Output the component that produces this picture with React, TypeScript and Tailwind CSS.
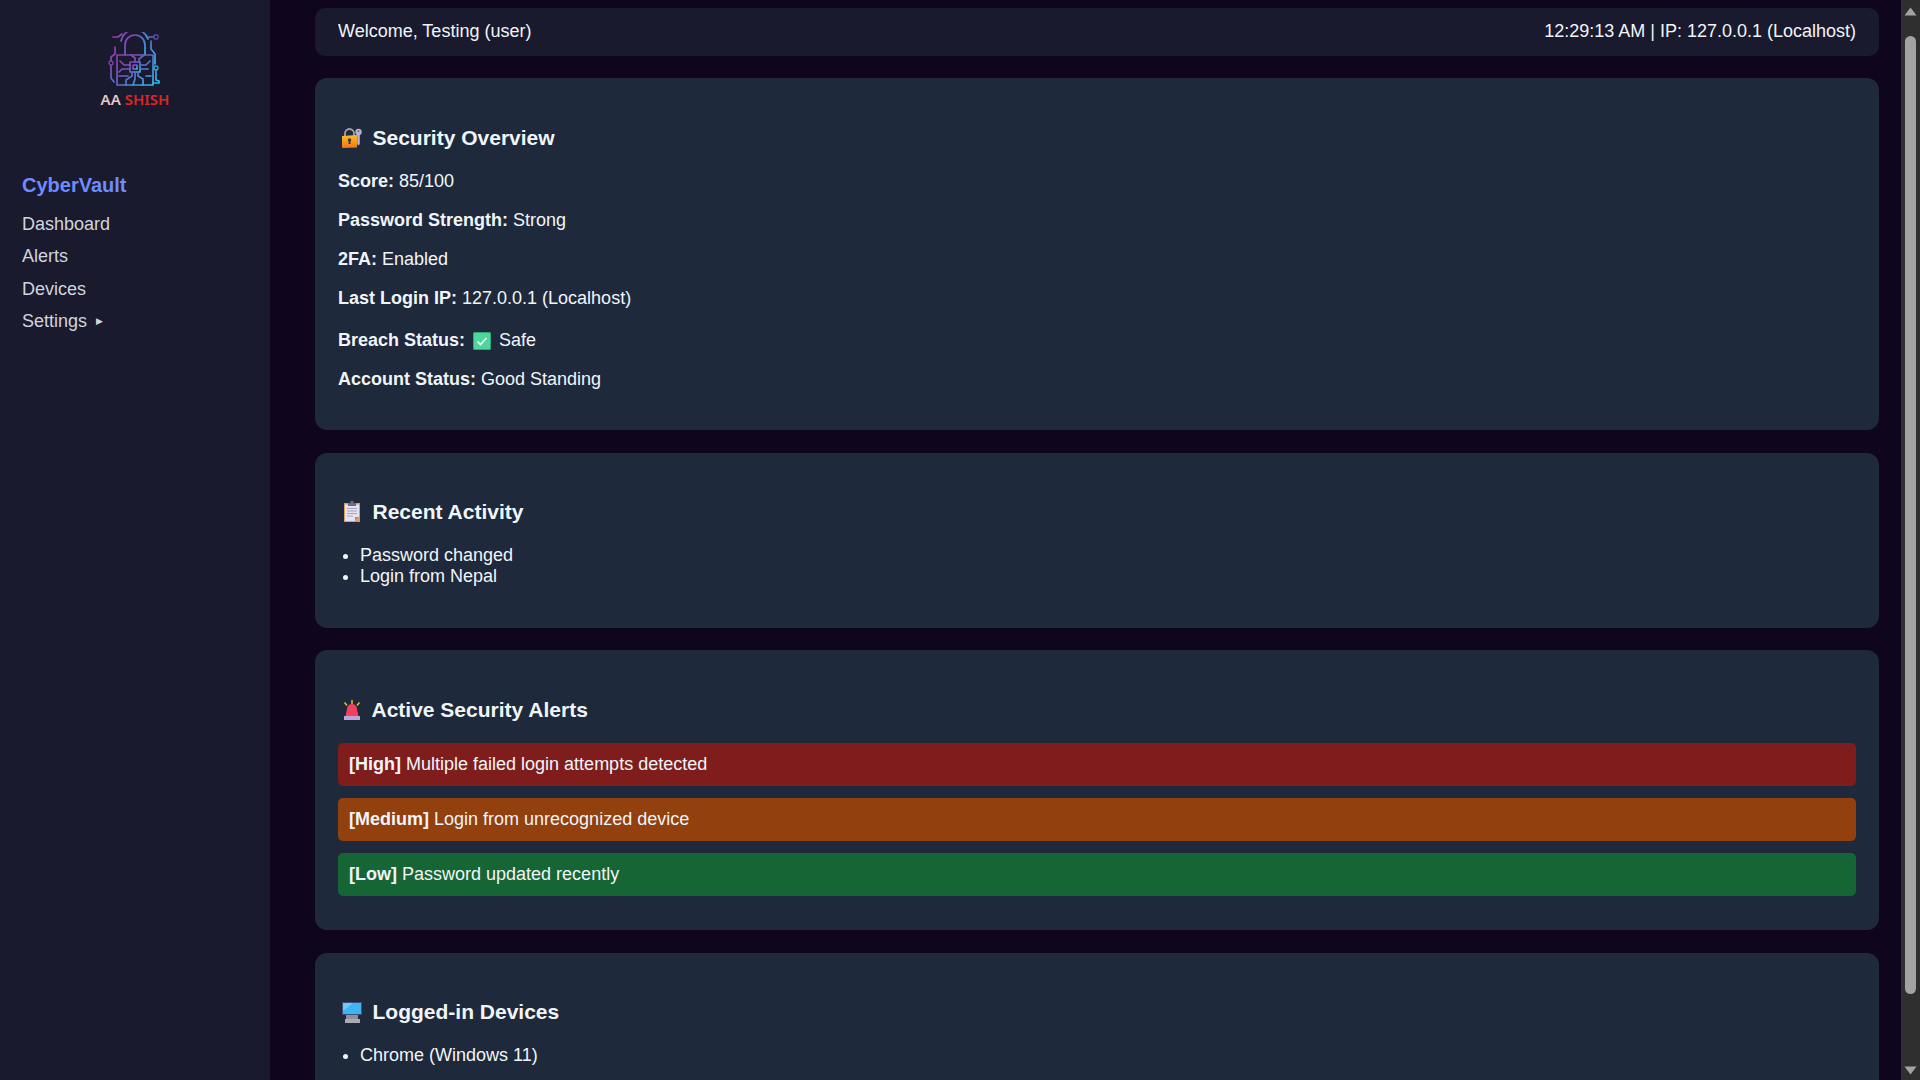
const Logo = () => (
  <svg width="54" height="56" viewBox="0 0 54 56" fill="none">
    <defs>
      <linearGradient id="lockGrad" x1="0" y1="0" x2="1" y2="1">
        <stop offset="0" stopColor="#9a35ad" />
        <stop offset="0.5" stopColor="#6068c4" />
        <stop offset="1" stopColor="#2bbdea" />
      </linearGradient>
    </defs>
    <g stroke="url(#lockGrad)" strokeWidth="1.7" strokeLinecap="round" strokeLinejoin="round">
      <path d="M17 23V13a10 10 0 0 1 20 0v10" />
      <path d="M13 9a14 14 0 0 1 27-2" />
      <path d="M9 23h36v30H9z" />
      <path d="M22 30h10v10H22z" />
      <path d="M25 33h4v4h-4z" />
      <path d="M27 30v-4l-4-3M31 30v-3l5-4M22 33h-6l-4-4M22 37h-8l-3 3M32 33h6l4-4M32 37h8M24 40v4l-6 4v5M30 40v4l5 3v6M27 40v7l-2 6M20 44h-9M38 44h5" />
      <path d="M7 15v7l-4 3v4M3 33v13l3 4M48 38v10l3 1v2H45" />
      <path d="M5 5h5l4-3M40 5h6M43 9v8l4 5v10" />
    </g>
    <circle cx="3" cy="31" r="2" stroke="#7b3fa8" strokeWidth="1.4" />
    <circle cx="48" cy="5" r="2.2" stroke="#54489f" strokeWidth="1.4" />
    <circle cx="48" cy="36" r="2" stroke="#2ea5d8" strokeWidth="1.4" />
  </svg>
);

const LockKey = () => (
  <svg width="22" height="22" viewBox="0 0 22 22">
    <defs>
      <linearGradient id="padGrad" x1="0" y1="0" x2="0" y2="1">
        <stop offset="0" stopColor="#fbbf24" />
        <stop offset="1" stopColor="#f97316" />
      </linearGradient>
    </defs>
    <path d="M4 9V6.5a4.5 4.5 0 0 1 9 0V9" fill="none" stroke="#a3a3ad" strokeWidth="1.8" />
    <path d="M1 9l15-1v12.5l-14 .5a1 1 0 0 1-1-1z" fill="url(#padGrad)" />
    <circle cx="8.5" cy="13" r="1.7" fill="#3b3347" />
    <path d="M7.8 13h1.4l.3 4h-2z" fill="#3b3347" />
    <circle cx="17.5" cy="5" r="3.2" fill="#b7b4cf" />
    <path d="M16.2 7h2.6v10l-1.3 1.5-1.3-1.5z" fill="#b7b4cf" />
    <circle cx="17.5" cy="4.2" r="1" fill="#6d6a86" />
  </svg>
);

const CheckBox = () => (
  <svg width="18" height="18" viewBox="0 0 18 18">
    <rect width="18" height="18" rx="1.5" fill="#2fa877" />
    <rect x="1" y="1" width="16" height="16" rx="1" fill="#4fd69a" />
    <path d="M4.5 9.5l3 3 6-6.5" fill="none" stroke="#f4fff9" strokeWidth="1.7" />
  </svg>
);

const Clipboard = () => (
  <svg width="22" height="22" viewBox="0 0 22 22">
    <rect x="3" y="2" width="16" height="19" fill="#dd9a63" />
    <path d="M4 3.5h14V16l-4 4H4z" fill="#e6e2f2" />
    <path d="M14 20l4-4h-4z" fill="#c9855a" />
    <rect x="7" y="2" width="8" height="3" fill="#6f6c80" />
    <rect x="9.5" y="0" width="3" height="2" fill="#6f6c80" />
    <path d="M6 7.5h10M6 10h10M6 12.5h10M6 15h6" stroke="#a8a4c0" strokeWidth="1" />
  </svg>
);

const Siren = () => (
  <svg width="22" height="22" viewBox="0 0 22 22">
    <path d="M11 1v4M3.5 3.5l2.5 3M18.5 3.5l-2.5 3" stroke="#e8b83a" strokeWidth="1.5" />
    <path d="M4.5 17l1.5-7a5 5 0 0 1 10 0l1.5 7z" fill="#f43f5e" />
    <rect x="3" y="17" width="16" height="4" fill="#b9a6dc" />
  </svg>
);

const Desktop = () => (
  <svg width="22" height="22" viewBox="0 0 22 22">
    <rect x="1" y="1" width="20" height="13" fill="#3d4f77" />
    <rect x="2" y="2" width="18" height="11" fill="#3fb4f2" />
    <path d="M2 2h10l-10 8z" fill="#6ccbf8" />
    <rect x="5" y="14" width="12" height="4" fill="#8f8fa0" />
    <rect x="4" y="18" width="15" height="4" fill="#a9a9b8" />
  </svg>
);

const Row = ({ label, children }: { label: string; children: React.ReactNode }) => (
  <p className="my-[18px] leading-[21px]">
    <strong className="font-bold">{label}</strong> {children}
  </p>
);

const Heading = ({ icon, gap, children }: { icon: React.ReactNode; gap: string; children: string }) => (
  <h3 className={`flex items-center pl-[3px] text-[21px] font-bold leading-6 ${gap}`}>
    {icon}
    {children}
  </h3>
);

const Alert = ({ level, text, color }: { level: string; text: string; color: string }) => (
  <div className={`h-[43px] rounded-[5px] px-[11px] pt-[11px] leading-[21px] ${color}`}>
    <strong className="font-bold">[{level}]</strong> {text}
  </div>
);

const Scrollbar = () => (
  <div className="flex h-screen w-[19px] shrink-0 flex-col items-center bg-[#2f2f2f]">
    <svg className="mt-[7px] shrink-0" width="13" height="9" viewBox="0 0 13 9">
      <path d="M6.5 0.5L12.5 8.5H0.5z" fill="#a3a3a3" />
    </svg>
    <div className="mt-[20px] h-[958px] w-[11px] shrink-0 rounded-full bg-[#a3a3a3]" />
    <svg className="mt-[72px] shrink-0" width="13" height="9" viewBox="0 0 13 9">
      <path d="M0.5 0.5H12.5L6.5 8.5z" fill="#a3a3a3" />
    </svg>
  </div>
);

export default function App() {
  return (
    <div className="flex h-screen overflow-hidden bg-[#0f051d] font-['Liberation_Sans',Arial,sans-serif] text-[18px] text-[#f1f5f9]">
      <aside className="flex w-[270px] shrink-0 flex-col bg-[#1a1a2e] px-[22px]">
        <div className="mt-[32px] flex flex-col items-center">
          <Logo />
          <div className="mt-[2px] font-['Noto_Sans',sans-serif] text-[15px] font-semibold leading-[18px]">
            <span className="text-[#e6c8c4]">AA</span> <span className="text-[#dc2626]">SHISH</span>
          </div>
        </div>
        <h2 className="mt-[65px] text-[20px] font-bold leading-6 text-[#6d8cff]">CyberVault</h2>
        <nav className="mt-[17px] flex flex-col gap-[12px] leading-[20.4px] text-[#d1d5db]">
          <a>Dashboard</a>
          <a>Alerts</a>
          <a>Devices</a>
          <a className="flex items-center">
            Settings
            <span className="ml-[9px] text-[9px] leading-none">▶</span>
          </a>
        </nav>
      </aside>

      <main className="flex min-w-0 flex-1 flex-col overflow-hidden pl-[45px] pr-[22px]">
        <header className="mt-[8px] flex h-[48px] shrink-0 items-center justify-between rounded-[10px] bg-[#1a1a2e] pb-[2px] pl-[23px] pr-[23px]">
          <span>Welcome, Testing (user)</span>
          <span>12:29:13 AM | IP: 127.0.0.1 (Localhost)</span>
        </header>

        <section className="mt-[22px] h-[352px] shrink-0 rounded-[12px] bg-[#1e293b] px-[23px] pt-[48px]">
          <Heading icon={<LockKey />} gap="gap-[9.5px]">Security Overview</Heading>
          <div className="mt-[21px]">
            <Row label="Score:">85/100</Row>
            <Row label="Password Strength:">Strong</Row>
            <Row label="2FA:">Enabled</Row>
            <Row label="Last Login IP:">127.0.0.1 (Localhost)</Row>
            <p className="my-[18px] flex items-center pt-[3px] leading-[21px]">
              <strong className="font-bold">Breach Status:</strong>
              <span className="ml-[8px] mr-[8px]"><CheckBox /></span>
              Safe
            </p>
            <Row label="Account Status:">Good Standing</Row>
          </div>
        </section>

        <section className="mt-[23px] h-[175px] shrink-0 rounded-[12px] bg-[#1e293b] px-[23px] pt-[47px]">
          <Heading icon={<Clipboard />} gap="gap-[9.5px]">Recent Activity</Heading>
          <ul className="mt-[21px] list-disc pl-[22px] leading-[21px]">
            <li>Password changed</li>
            <li>Login from Nepal</li>
          </ul>
        </section>

        <section className="mt-[22px] h-[280px] shrink-0 rounded-[12px] bg-[#1e293b] px-[23px] pt-[48px]">
          <Heading icon={<Siren />} gap="gap-[8.5px]">Active Security Alerts</Heading>
          <div className="mt-[21px] flex flex-col gap-[12px]">
            <Alert level="High" text="Multiple failed login attempts detected" color="bg-[#7f1d1d]" />
            <Alert level="Medium" text="Login from unrecognized device" color="bg-[#92400e]" />
            <Alert level="Low" text="Password updated recently" color="bg-[#166534]" />
          </div>
        </section>

        <section className="mt-[23px] h-[200px] shrink-0 rounded-[12px] bg-[#1e293b] px-[23px] pt-[47px]">
          <Heading icon={<Desktop />} gap="gap-[9.5px]">Logged-in Devices</Heading>
          <ul className="mt-[21px] list-disc pl-[22px] leading-[21px]">
            <li>Chrome (Windows 11)</li>
          </ul>
        </section>
      </main>

      <Scrollbar />
    </div>
  );
}
